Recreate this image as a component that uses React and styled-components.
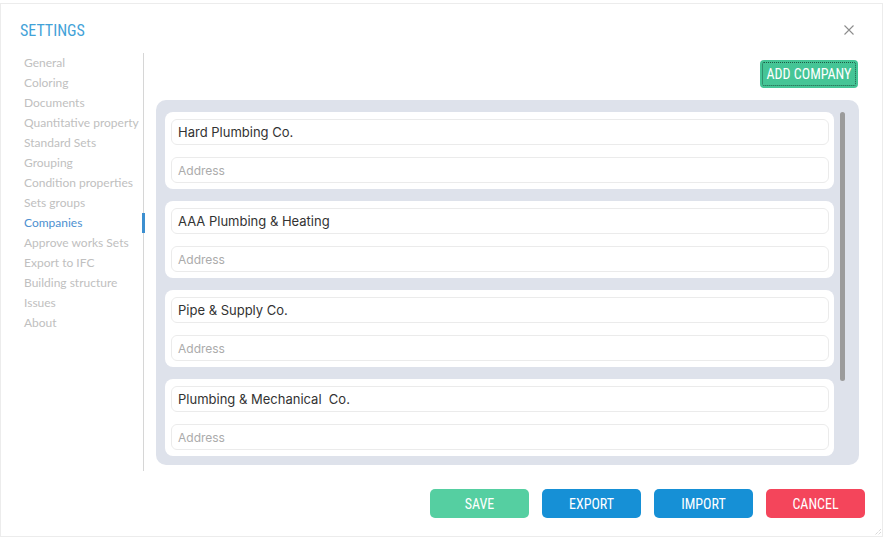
import React from "react";
import styled, { createGlobalStyle } from "styled-components";

const Global = createGlobalStyle`
  html, body { margin: 0; padding: 0; background: #fff; }
  body { font-family: "Lato", "Liberation Sans", sans-serif; }
  * { box-sizing: border-box; }
`;

const COND = `"Liberation Sans Narrow", "Roboto Condensed", "DejaVu Sans Condensed", "Roboto", sans-serif`;

const Page = styled.div`
  width: 885px;
  height: 538px;
  padding: 3px 2px 1px 0;
`;

const Dialog = styled.div`
  position: relative;
  width: 883px;
  height: 534px;
  border: 1px solid #ececec;
  display: flex;
  flex-direction: column;
`;

const Header = styled.div`
  display: flex;
  align-items: center;
  justify-content: space-between;
  height: 49px;
  padding: 3px 27px 0 19px;
`;

const Title = styled.div`
  font-family: ${COND};
  font-size: 16px;
  color: #42a2d8;
`;

const Close = styled.button`
  border: 0;
  background: none;
  padding: 0;
  width: 12px;
  height: 12px;
  display: flex;
  cursor: pointer;
`;

const Body = styled.div`
  display: flex;
  padding-left: 20px;
  height: 418px;
`;

const Sidebar = styled.nav`
  width: 123px;
  border-right: 1px solid #d6d6d6;
  display: flex;
  flex-direction: column;
`;

const NavItem = styled.div`
  position: relative;
  height: 20px;
  line-height: 20px;
  padding-left: 3px;
  font-size: 12px;
  white-space: nowrap;
  color: ${(p) => (p.$active ? "#4d90d0" : "#c0c0c0")};
  &::after {
    content: "";
    display: ${(p) => (p.$active ? "block" : "none")};
    position: absolute;
    right: -2px;
    top: 0;
    width: 3px;
    height: 20px;
    background: #3c8fd0;
  }
`;

const Content = styled.div`
  flex: 1;
  padding: 7px 23px 0 12px;
  display: flex;
  flex-direction: column;
`;

const TopBar = styled.div`
  display: flex;
  justify-content: flex-end;
  height: 40px;
  padding-right: 1px;
`;

const AddButton = styled.button`
  width: 98px;
  height: 28px;
  border: 0;
  border-radius: 4px;
  background: #45c596;
  color: #fff;
  font-family: ${COND};
  font-size: 14px;
  outline: 1px dotted #1f5a45;
  outline-offset: -3px;
  padding: 0;
  cursor: pointer;
`;

const Panel = styled.div`
  height: 365px;
  background: #dee2eb;
  border-radius: 10px;
  padding: 12px 14px 0 9px;
  display: flex;
  gap: 6px;
  overflow: hidden;
`;

const List = styled.div`
  flex: 1;
  display: flex;
  flex-direction: column;
  gap: 12px;
`;

const Card = styled.div`
  background: #fff;
  border-radius: 8px;
  padding: 7px 5px 6px 6px;
  display: flex;
  flex-direction: column;
  gap: 12px;
`;

const Field = styled.div`
  height: 26px;
  border: 1px solid #ebebeb;
  border-radius: 6px;
  display: flex;
  align-items: center;
  padding-left: 6px;
  font-family: "Inter", "Noto Sans", sans-serif;
  font-size: ${(p) => (p.$placeholder ? "12px" : "13px")};
  color: ${(p) => (p.$placeholder ? "#ababab" : "#333")};
  white-space: pre;
`;

const Track = styled.div`
  width: 5px;
  flex-shrink: 0;
`;

const Thumb = styled.div`
  width: 5px;
  height: 269px;
  border-radius: 3px;
  background: #9b9b9b;
`;

const Footer = styled.div`
  display: flex;
  justify-content: flex-end;
  gap: 13px;
  padding: 18px 17px 0 0;
`;

const colors = {
  save: "#55cfa1",
  blue: "#1690d6",
  cancel: "#f4455b",
};

const ActionButton = styled.button`
  width: 99px;
  height: 29px;
  border: 0;
  border-radius: 5px;
  background: ${(p) => colors[p.$kind]};
  color: #fff;
  font-family: ${COND};
  font-size: 14px;
  padding: 0;
  cursor: pointer;
`;

const Grip = styled.svg`
  position: absolute;
  right: 0;
  bottom: 0;
`;

const navItems = [
  "General",
  "Coloring",
  "Documents",
  "Quantitative property",
  "Standard Sets",
  "Grouping",
  "Condition properties",
  "Sets groups",
  "Companies",
  "Approve works Sets",
  "Export to IFC",
  "Building structure",
  "Issues",
  "About",
];

const companies = [
  "Hard Plumbing Co.",
  "AAA Plumbing & Heating",
  "Pipe & Supply Co.",
  "Plumbing & Mechanical  Co.",
];

export default function App() {
  return (
    <Page>
      <Global />
      <Dialog>
        <Header>
          <Title>SETTINGS</Title>
          <Close aria-label="close">
            <svg width="12" height="12" viewBox="0 0 12 12">
              <path d="M1.5 1.5 L10.5 10.5 M10.5 1.5 L1.5 10.5" stroke="#8d8d8d" strokeWidth="1.1" />
            </svg>
          </Close>
        </Header>
        <Body>
          <Sidebar>
            {navItems.map((n) => (
              <NavItem key={n} $active={n === "Companies"}>
                {n}
              </NavItem>
            ))}
          </Sidebar>
          <Content>
            <TopBar>
              <AddButton>ADD COMPANY</AddButton>
            </TopBar>
            <Panel>
              <List>
                {companies.map((c) => (
                  <Card key={c}>
                    <Field>{c}</Field>
                    <Field $placeholder>Address</Field>
                  </Card>
                ))}
              </List>
              <Track>
                <Thumb />
              </Track>
            </Panel>
          </Content>
        </Body>
        <Footer>
          <ActionButton $kind="save">SAVE</ActionButton>
          <ActionButton $kind="blue">EXPORT</ActionButton>
          <ActionButton $kind="blue">IMPORT</ActionButton>
          <ActionButton $kind="cancel">CANCEL</ActionButton>
        </Footer>
        <Grip width="8" height="8" viewBox="0 0 8 8">
          <path d="M7 1 L1 7 M7 4 L4 7" stroke="#c8c8c8" strokeWidth="1" strokeDasharray="1 1" />
        </Grip>
      </Dialog>
    </Page>
  );
}
